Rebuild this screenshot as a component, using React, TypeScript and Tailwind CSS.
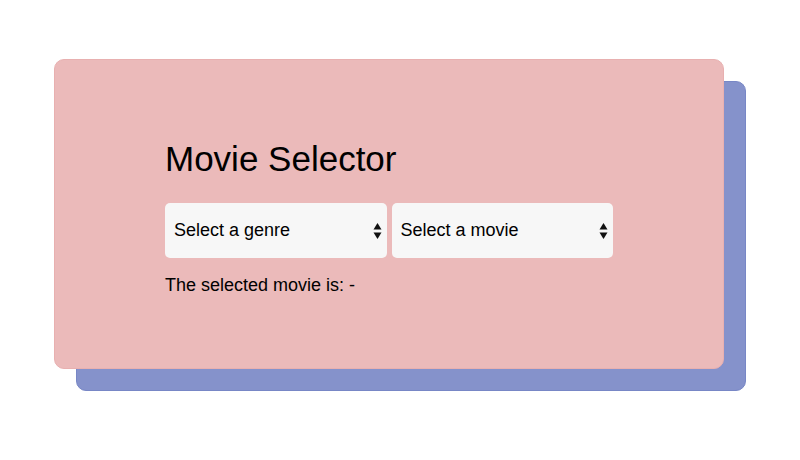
import { useState } from "react";

const genres = ["Action", "Comedy", "Drama"];
const movies: Record<string, string[]> = {
  Action: ["Mad Max", "Die Hard"],
  Comedy: ["Superbad", "Step Brothers"],
  Drama: ["The Godfather", "Forrest Gump"],
};

const Arrows = () => (
  <svg
    className="pointer-events-none absolute right-[5px] top-1/2 -translate-y-1/2"
    width="9"
    height="17"
    viewBox="0 0 9 17"
  >
    <polygon points="4.5,0.5 8.5,7 0.5,7" fill="#111" />
    <polygon points="0.5,10 8.5,10 4.5,16.5" fill="#111" />
  </svg>
);

const App = () => {
  const [genre, setGenre] = useState("");
  const [movie, setMovie] = useState("");

  return (
    <div className="w-full h-[460px] bg-white flex justify-center pt-[59px] font-['Liberation_Sans',Arial,sans-serif] text-black">
      <div className="grid w-[692px] h-[332px]">
        <div className="col-start-1 row-start-1 ml-[22px] mt-[22px] rounded-[10px] bg-[#8592cb] border border-[#7887c6]" />
        <div className="col-start-1 row-start-1 mr-[22px] mb-[22px] rounded-[10px] bg-[#ebbaba] border border-[#e8b0b0] pt-[81px]">
          <div className="w-[448px] mx-auto">
            <h1 className="text-[35px] leading-none">Movie Selector</h1>
            <div className="grid grid-cols-2 gap-[5px] mt-[27px]">
              <div className="relative">
                <select
                  value={genre}
                  onChange={(e) => {
                    setGenre(e.target.value);
                    setMovie("");
                  }}
                  className="appearance-none w-full h-[55px] rounded-[5px] bg-[#f7f7f7] pl-[9px] text-[18px] outline-none"
                >
                  <option value="">Select a genre</option>
                  {genres.map((g) => (
                    <option key={g} value={g}>
                      {g}
                    </option>
                  ))}
                </select>
                <Arrows />
              </div>
              <div className="relative">
                <select
                  value={movie}
                  onChange={(e) => setMovie(e.target.value)}
                  className="appearance-none w-full h-[55px] rounded-[5px] bg-[#f7f7f7] pl-[9px] text-[18px] outline-none"
                >
                  <option value="">Select a movie</option>
                  {(movies[genre] || []).map((m) => (
                    <option key={m} value={m}>
                      {m}
                    </option>
                  ))}
                </select>
                <Arrows />
              </div>
            </div>
            <p className="text-[18px] leading-none mt-[18px]">
              The selected movie is: {movie || "-"}
            </p>
          </div>
        </div>
      </div>
    </div>
  );
};

export default App;
